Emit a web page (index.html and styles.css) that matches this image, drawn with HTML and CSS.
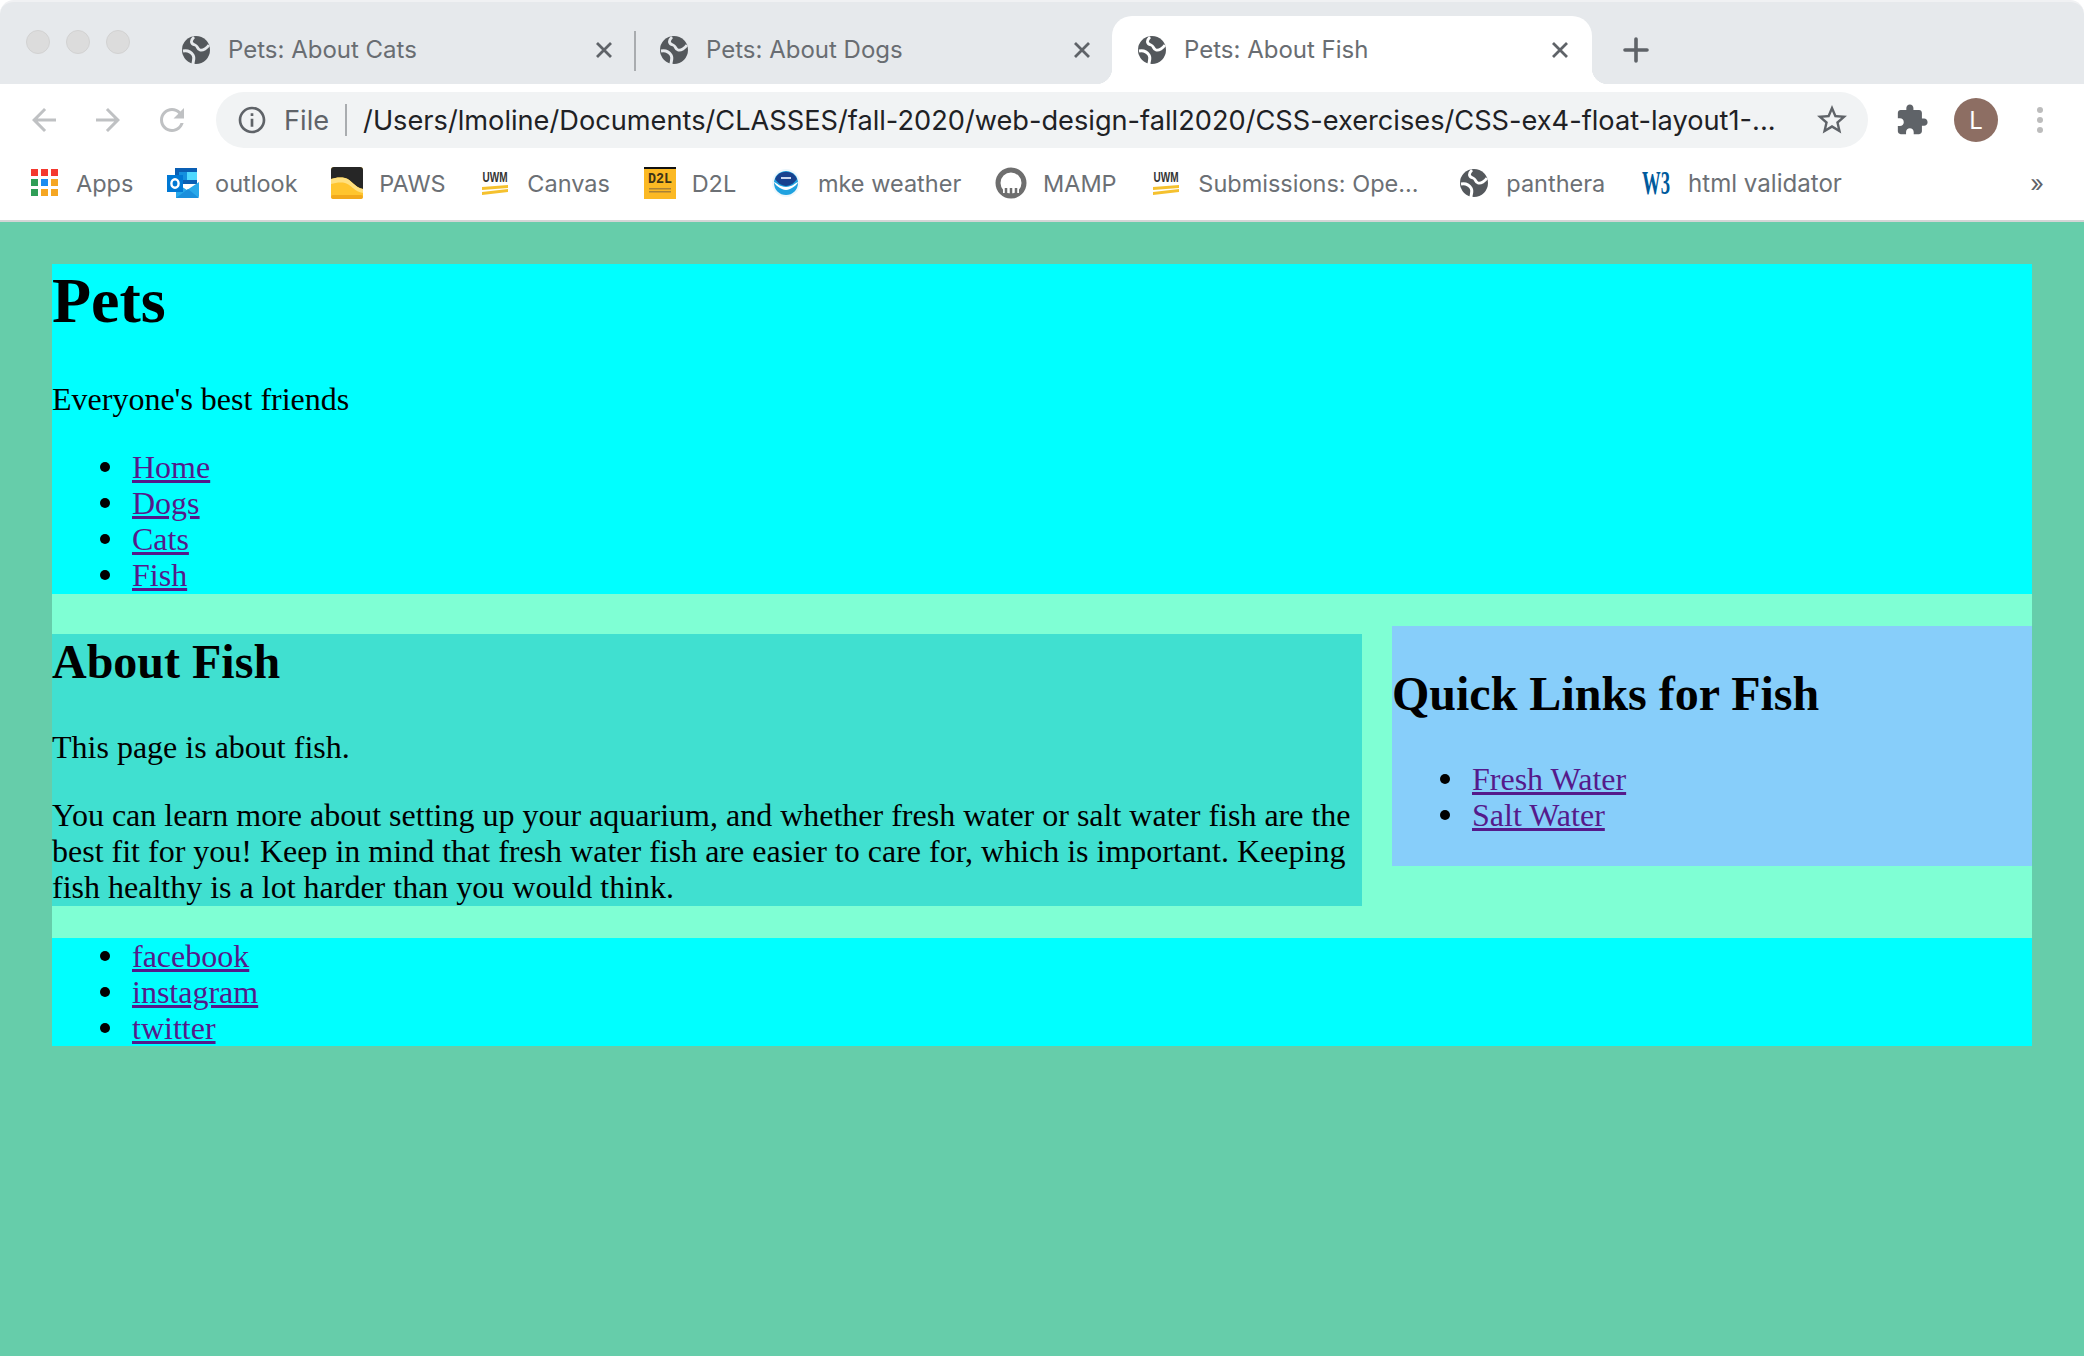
FILE: index.html
```html
<!DOCTYPE html>
<html lang="en">
<head>
    <meta charset="UTF-8"/>
    <title>Pets: About Fish</title>
    <link rel="stylesheet" href="styles.css">
</head>
<body>

<svg class="defs" width="0" height="0">
    <defs>
        <mask id="globeMask">
            <rect width="28" height="28" fill="#fff"/>
            <path d="M12 1C8 5 9 8 13 9c3 1 2 4 5 5s7-2 9-5" fill="none" stroke="#000" stroke-width="2.800"/>
            <path d="M1 15c5-1 8 1 10 4s0 6 0 9" fill="none" stroke="#000" stroke-width="3"/>
        </mask>
        <symbol id="globe" viewBox="0 0 28 28">
            <circle cx="14" cy="14" r="14" fill="#54585c" mask="url(#globeMask)"/>
        </symbol>
        <symbol id="close" viewBox="0 0 24 24">
            <path d="M5 5l14 14M19 5L5 19" fill="none" stroke="#5f6368" stroke-width="2.800"/>
        </symbol>
        <symbol id="uwm" viewBox="0 0 32 32">
            <text x="16" y="15" text-anchor="middle" textLength="25" lengthAdjust="spacingAndGlyphs" class="uwm-text">UWM</text>
            <path d="M3 20l26-2v3L3 23zM3 25l26-3v3L3 28z" fill="#f5c12e"/>
        </symbol>
    </defs>
</svg>

<div class="browser">
    <div class="tabstrip">
        <div class="lights">
            <span class="light"></span>
            <span class="light"></span>
            <span class="light"></span>
        </div>
        <div class="tab tab-sep">
            <svg class="tab-globe"><use href="#globe"/></svg>
            <span class="tab-title">Pets: About Cats</span>
            <svg class="tab-close"><use href="#close"/></svg>
        </div>
        <div class="tab">
            <svg class="tab-globe"><use href="#globe"/></svg>
            <span class="tab-title">Pets: About Dogs</span>
            <svg class="tab-close"><use href="#close"/></svg>
        </div>
        <div class="tab tab-active">
            <svg class="tab-globe"><use href="#globe"/></svg>
            <span class="tab-title">Pets: About Fish</span>
            <svg class="tab-close"><use href="#close"/></svg>
        </div>
        <svg class="new-tab" viewBox="0 0 28 28">
            <path d="M14 3v22M3 14h22" fill="none" stroke="#5f6368" stroke-width="3.600" stroke-linecap="round"/>
        </svg>
    </div>

    <div class="toolbar">
        <div class="tool-btn">
            <svg class="tool-icon" viewBox="0 0 24 24"><path class="muted" d="M20 11H7.830l5.590-5.590L12 4l-8 8 8 8 1.410-1.410L7.830 13H20v-2z"/></svg>
        </div>
        <div class="tool-btn">
            <svg class="tool-icon" viewBox="0 0 24 24"><path class="muted" d="M12 4l-1.410 1.410L16.170 11H4v2h12.170l-5.580 5.590L12 20l8-8z"/></svg>
        </div>
        <div class="tool-btn">
            <svg class="tool-icon" viewBox="0 0 24 24"><path class="muted" d="M17.650 6.350C16.200 4.900 14.210 4 12 4c-4.420 0-7.990 3.580-7.990 8s3.570 8 7.990 8c3.730 0 6.840-2.550 7.730-6h-2.080c-.82 2.330-3.040 4-5.650 4-3.310 0-6-2.690-6-6s2.690-6 6-6c1.660 0 3.140.69 4.220 1.780L13 11h7V4l-2.350 2.350z"/></svg>
        </div>
        <div class="omnibox">
            <svg class="info-icon" viewBox="0 0 24 24"><path class="dark" d="M11 7h2v2h-2zm0 4h2v6h-2zm1-9C6.480 2 2 6.480 2 12s4.480 10 10 10 10-4.480 10-10S17.520 2 12 2zm0 18c-4.410 0-8-3.590-8-8s3.590-8 8-8 8 3.590 8 8-3.590 8-8 8z"/></svg>
            <span class="scheme">File</span>
            <span class="omni-sep"></span>
            <span class="url">/Users/lmoline/Documents/CLASSES/fall-2020/web-design-fall2020/CSS-exercises/CSS-ex4-float-layout1-...</span>
            <svg class="star-icon" viewBox="0 0 24 24"><path class="dark" d="M22 9.240l-7.190-.62L12 2 9.190 8.630 2 9.240l5.460 4.730L5.820 21 12 17.270 18.180 21l-1.630-7.030L22 9.240zM12 15.400l-3.760 2.270 1-4.280-3.320-2.880 4.380-.38L12 6.100l1.710 4.040 4.380.38-3.320 2.880 1 4.280L12 15.400z"/></svg>
        </div>
        <div class="tool-btn">
            <svg class="puzzle-icon" viewBox="0 0 24 24"><path class="dark" d="M20.500 11H19V7c0-1.100-.9-2-2-2h-4V3.500C13 2.120 11.880 1 10.500 1S8 2.120 8 3.500V5H4c-1.100 0-1.990.9-1.990 2v3.800H3.500c1.490 0 2.700 1.210 2.700 2.700s-1.210 2.700-2.700 2.700H2V20c0 1.100.9 2 2 2h3.800v-1.500c0-1.490 1.210-2.700 2.700-2.700 1.490 0 2.700 1.210 2.700 2.700V22H17c1.100 0 2-.9 2-2v-4h1.500c1.380 0 2.500-1.120 2.500-2.500S21.880 11 20.500 11z"/></svg>
        </div>
        <div class="tool-btn"><span class="avatar">L</span></div>
        <div class="tool-btn">
            <div class="kebab"><span></span><span></span><span></span></div>
        </div>
    </div>

    <div class="bookmarks">
        <div class="bm">
            <svg class="bm-icon" viewBox="0 0 32 32">
                <rect x="3" y="2" width="7" height="7" fill="#f4392f"/><rect x="13" y="2" width="7" height="7" fill="#f4392f"/><rect x="23" y="2" width="7" height="7" fill="#f4392f"/>
                <rect x="3" y="12" width="7" height="7" fill="#2f9e57"/><rect x="13" y="12" width="7" height="7" fill="#1a8cf0"/><rect x="23" y="12" width="7" height="7" fill="#f5a623"/>
                <rect x="3" y="22" width="7" height="7" fill="#2f9e57"/><rect x="13" y="22" width="7" height="7" fill="#f5a623"/><rect x="23" y="22" width="7" height="7" fill="#f5a623"/>
            </svg>
            Apps
        </div>
        <div class="bm">
            <svg class="bm-icon" viewBox="0 0 32 32">
                <rect x="8" y="1" width="22" height="16" fill="#0a5fb4"/>
                <rect x="19" y="5" width="11" height="8" fill="#50d9ff"/>
                <rect x="12" y="5" width="8" height="8" fill="#1490df"/>
                <path d="M9 16l11 7 12-8v14a2 2 0 0 1-2 2H9z" fill="#28a8ea"/>
                <path d="M9 31l12-9 11 9z" fill="#1a8fdc"/>
                <rect x="0" y="8" width="16" height="17" fill="#0078d4"/>
                <ellipse cx="8" cy="16.500" rx="3.600" ry="4.200" fill="none" stroke="#fff" stroke-width="2.400"/>
            </svg>
            outlook
        </div>
        <div class="bm">
            <svg class="bm-icon" viewBox="0 0 32 32">
                <rect x="0" y="0" width="32" height="32" rx="3" fill="#ffc52e"/>
                <path d="M0 3a3 3 0 0 1 3-3h26a3 3 0 0 1 3 3v19c-8-1-12-10-18-11-6-1-10 0-14 1z" fill="#262626"/>
                <path d="M0 12c4-1 8-2 14-1 6 1 10 10 18 11v4c-8-1-13-9-18-10-5-1-10 0-14 1z" fill="#ffe07f"/>
                <rect x="0" y="28" width="32" height="4" rx="2" fill="#f2a91c"/>
            </svg>
            PAWS
        </div>
        <div class="bm"><svg class="bm-icon"><use href="#uwm"/></svg>Canvas</div>
        <div class="bm">
            <svg class="bm-icon" viewBox="0 0 32 32">
                <rect x="0" y="0" width="32" height="32" fill="#fbb924"/>
                <rect x="0" y="0" width="32" height="2" fill="#111"/>
                <text x="16" y="16" text-anchor="middle" textLength="24" lengthAdjust="spacingAndGlyphs" class="d2l-text">D2L</text>
                <rect x="5" y="21" width="22" height="1.500" fill="#a98236"/>
                <rect x="5" y="24" width="22" height="1.500" fill="#a98236"/>
            </svg>
            D2L
        </div>
        <div class="bm">
            <svg class="bm-icon" viewBox="0 0 32 32">
                <circle cx="16" cy="16" r="14" fill="#eef7fc"/>
                <circle cx="16" cy="16" r="12" fill="#1fa2e0"/>
                <path d="M5 12a12 12 0 0 1 22 0c-2 3-6 7-11 7S7 15 5 12z" fill="#17418f"/>
                <path d="M4 15c3 1 6 5 12 5s9-4 12-5c0 2-7 8-12 8S4 17 4 15z" fill="#fff"/>
                <rect x="11" y="10" width="10" height="2" fill="#c9d6ee"/>
            </svg>
            mke weather
        </div>
        <div class="bm">
            <svg class="bm-icon" viewBox="0 0 32 32">
                <circle cx="16" cy="16" r="13" fill="#fff" stroke="#6e6e6e" stroke-width="5"/>
                <path d="M8 26v-8c0-5 3-8 8-8s8 3 8 8v8h-3v-5h-3v5h-4v-5h-3v5z" fill="#fff"/>
                <path d="M11 27v-6M16 27v-6M21 27v-6" stroke="#6e6e6e" stroke-width="2.500"/>
            </svg>
            MAMP
        </div>
        <div class="bm"><svg class="bm-icon"><use href="#uwm"/></svg>Submissions: Ope...</div>
        <div class="bm bm-globe"><svg class="bm-icon"><use href="#globe" x="2" y="2" width="28" height="28"/></svg>panthera</div>
        <div class="bm bm-wide">
            <svg class="bm-icon" viewBox="0 0 32 32">
                <text x="16" y="27" text-anchor="middle" textLength="28" lengthAdjust="spacingAndGlyphs" class="w3-text">W3</text>
            </svg>
            html validator
        </div>
        <span class="bm-more">»</span>
    </div>
</div>

<div class="page">
    <header class="site-header">
        <h1>Pets</h1>
        <p>Everyone's best friends</p>
        <ul>
            <li><a href="#">Home</a></li>
            <li><a href="#">Dogs</a></li>
            <li><a href="#">Cats</a></li>
            <li><a href="#">Fish</a></li>
        </ul>
    </header>

    <main class="site-main">
        <article class="about">
            <h2>About Fish</h2>
            <p>This page is about fish.</p>
            <p>You can learn more about setting up your aquarium, and whether fresh water or salt water fish are the best fit for you! Keep in mind that fresh water fish are easier to care for, which is important. Keeping fish healthy is a lot harder than you would think.</p>
        </article>
        <aside class="quick-links">
            <h2>Quick Links for Fish</h2>
            <ul>
                <li><a href="#">Fresh Water</a></li>
                <li><a href="#">Salt Water</a></li>
            </ul>
        </aside>
    </main>

    <footer class="site-footer">
        <ul>
            <li><a href="#">facebook</a></li>
            <li><a href="#">instagram</a></li>
            <li><a href="#">twitter</a></li>
        </ul>
    </footer>
</div>

</body>
</html>
```

FILE: styles.css
```css
* {
    box-sizing: border-box;
}

html, body {
    height: 100%;
}

body {
    margin: 0;
    display: flex;
    flex-direction: column;
    background: #fff;
    overflow: hidden;
}

.defs {
    position: absolute;
}

/* browser chrome */

.browser {
    flex: none;
    font-family: "Inter", "Roboto", sans-serif;
}

.tabstrip {
    display: flex;
    align-items: center;
    height: 84px;
    background: #e6e9ec;
    border-top: 2px solid #f0f1f3;
    border-radius: 14px 14px 0 0;
}

.lights {
    display: flex;
    gap: 16px;
    width: 156px;
    padding-left: 26px;
    margin-bottom: 2px;
}

.light {
    width: 24px;
    height: 24px;
    border-radius: 50%;
    background: #dcdcdc;
    border: 1px solid #d2d2d2;
}

.tab {
    position: relative;
    display: flex;
    align-items: center;
    align-self: flex-end;
    width: 478px;
    height: 68px;
    padding-left: 26px;
    color: #696d72;
    font-size: 24px;
}

.tab-globe {
    flex: none;
    width: 28px;
    height: 28px;
    margin-right: 18px;
}

.tab-title {
    flex: 1;
    margin-bottom: 2px;
}

.tab-close {
    flex: none;
    width: 24px;
    height: 24px;
    margin-right: 18px;
}

.tab-sep::after {
    content: "";
    position: absolute;
    right: -2px;
    top: 15px;
    width: 2px;
    height: 40px;
    background: #a9acaf;
}

.tab-active {
    width: 480px;
    background: #fff;
    border-radius: 20px 20px 0 0;
}

.tab-active .tab-close {
    margin-right: 20px;
}

.tab-active::before,
.tab-active::after {
    content: "";
    position: absolute;
    bottom: 0;
    width: 16px;
    height: 16px;
}

.tab-active::before {
    left: -16px;
    background: radial-gradient(circle at 0 0, transparent 16px, #fff 16.500px);
}

.tab-active::after {
    right: -16px;
    background: radial-gradient(circle at 100% 0, transparent 16px, #fff 16.500px);
}

.new-tab {
    width: 28px;
    height: 28px;
    margin: 14px 0 0 30px;
}

.toolbar {
    display: flex;
    align-items: center;
    height: 72px;
    padding: 0 12px;
    background: #fff;
}

.tool-btn {
    flex: none;
    display: flex;
    justify-content: center;
    align-items: center;
    width: 64px;
    height: 56px;
}

.tool-icon {
    width: 36px;
    height: 36px;
}

.muted {
    fill: #bfc1c3;
}

.dark {
    fill: #5f6368;
}

.omnibox {
    flex: 1;
    min-width: 0;
    display: flex;
    align-items: center;
    height: 56px;
    margin: 0 12px;
    padding: 0 18px 0 20px;
    background: #f1f3f4;
    border-radius: 28px;
}

.info-icon {
    flex: none;
    width: 32px;
    height: 32px;
    margin-right: 16px;
}

.scheme {
    color: #5f6368;
    font-size: 27.200px;
}

.omni-sep {
    flex: none;
    width: 2px;
    height: 32px;
    margin: 0 16px;
    background: #a9acaf;
}

.url {
    flex: 1;
    min-width: 0;
    color: #202124;
    font-size: 27.200px;
    white-space: nowrap;
}

.star-icon {
    flex: none;
    width: 36px;
    height: 36px;
}

.puzzle-icon {
    width: 34px;
    height: 34px;
}

.avatar {
    display: flex;
    justify-content: center;
    align-items: center;
    width: 44px;
    height: 44px;
    border-radius: 50%;
    background: #8d6e63;
    color: #fff;
    font-size: 24px;
}

.kebab {
    display: flex;
    flex-direction: column;
    gap: 4px;
}

.kebab span {
    width: 6px;
    height: 6px;
    border-radius: 50%;
    background: #bcbcbc;
}

.bookmarks {
    display: flex;
    align-items: center;
    gap: 33.700px;
    height: 66px;
    padding: 0 40px 10px 28px;
    background: #fff;
    border-bottom: 2px solid #d3d5d6;
    color: #6c7075;
    font-size: 23.500px;
}

.bm {
    display: flex;
    align-items: center;
    gap: 16px;
    white-space: nowrap;
}

.bm-globe {
    margin-left: 6px;
}

.bm-wide {
    margin-left: 1px;
    font-size: 24.100px;
}

.bm-icon {
    flex: none;
    width: 32px;
    height: 32px;
}

.bm-more {
    margin-left: auto;
    color: #5f6368;
}

.uwm-text {
    font-family: "Liberation Sans", sans-serif;
    font-size: 14px;
    font-weight: bold;
    fill: #333;
}

.d2l-text {
    font-family: "Liberation Mono", monospace;
    font-size: 14px;
    font-weight: bold;
    fill: #3d3316;
}

.w3-text {
    font-family: "Liberation Serif", serif;
    font-size: 33px;
    font-weight: bold;
    fill: #005a9c;
}

/* the page itself */

.page {
    flex: 1;
    padding: 42px 52px;
    background: #66cdaa;
    color: #000;
    font-family: "Liberation Serif", "Times New Roman", serif;
    font-size: 32px;
    line-height: 36px;
}

a {
    color: #551a8b;
}

h1 {
    margin: 0 0 43px;
    font-size: 64px;
    line-height: 74px;
}

h2 {
    margin: 0 0 40px;
    font-size: 48px;
    line-height: 55px;
}

p {
    margin: 0 0 32px;
}

ul {
    margin: 0;
    padding-left: 80px;
    list-style: none;
}

li {
    position: relative;
}

li::before {
    content: "";
    position: absolute;
    left: -32px;
    top: 13px;
    width: 10px;
    height: 10px;
    border-radius: 50%;
    background: #000;
}

.site-header {
    padding-bottom: 1px;
    background: #00ffff;
}

.site-main {
    display: flex;
    align-items: flex-start;
    gap: 30px;
    background: #7fffd4;
}

.about {
    flex: none;
    width: 1310px;
    margin: 40px 0 32px;
    padding-bottom: 1px;
    background: #40e0d0;
}

.about p:last-child {
    margin-bottom: 0;
}

.quick-links {
    flex: 1;
    margin-top: 32px;
    padding: 40px 0 33px;
    background: #87cefa;
}

.site-footer {
    background: #00ffff;
}
```
